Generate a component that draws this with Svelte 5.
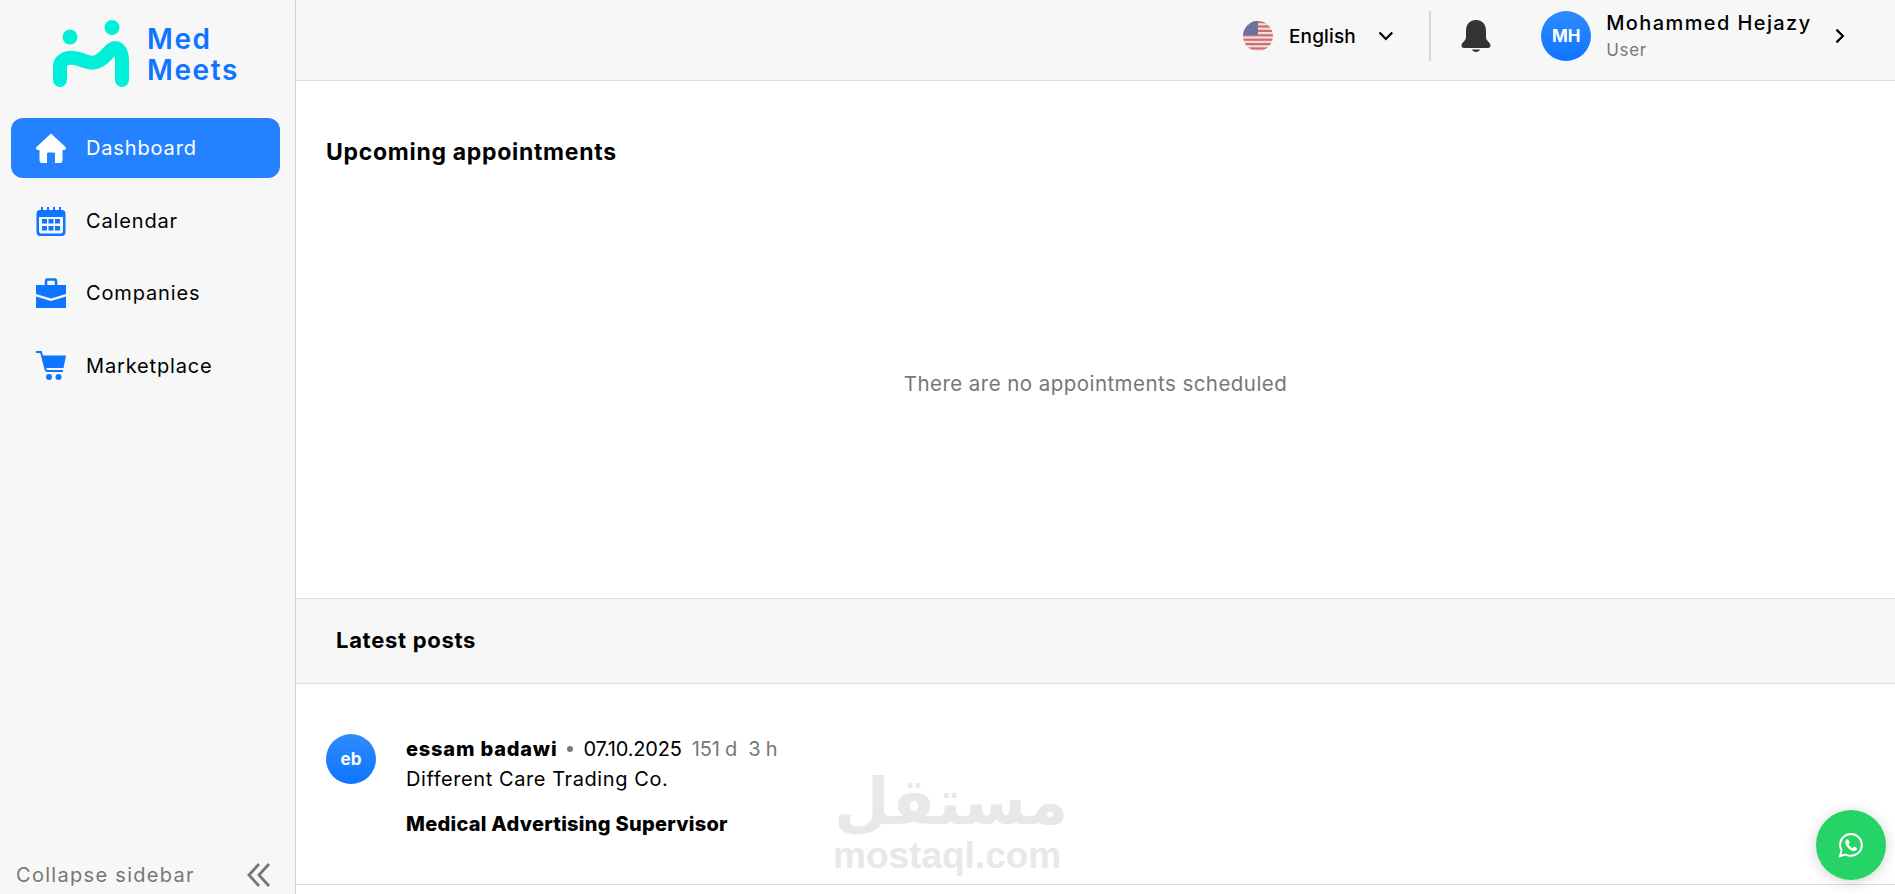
<script>
	const navItems = [
		{ label: 'Dashboard', icon: 'home', active: true },
		{ label: 'Calendar', icon: 'calendar' },
		{ label: 'Companies', icon: 'case' },
		{ label: 'Marketplace', icon: 'cart' }
	];
	const stripes = [0, 1, 2, 3, 4, 5, 6];
</script>

<div class="layout">
	<aside class="sidebar">
		<div class="brand">
			<svg class="logo" viewBox="0 0 80 72" width="80" height="72">
				<circle cx="17" cy="17" r="7.500" fill="#00efd8" />
				<circle cx="59" cy="7.500" r="7.500" fill="#00efd8" />
				<path d="M7 60 V47 C7 38 17 36 26 39 C36 43 42 45 50 38 C56 33 58 28 62 28 C66 28 69 33 69 40 V60" fill="none" stroke="#00efd8" stroke-width="14" stroke-linecap="round" />
			</svg>
			<div class="brand-name">Med<br />Meets</div>
		</div>
		<nav class="nav">
			{#each navItems as item}
				<div class="nav-item" class:active={item.active}>
					<svg class="nav-icon" viewBox="0 0 30 30" width="30" height="30">
						{#if item.icon === 'home'}
							<path d="M15 0.500 L29.500 14 C30.500 15.500 29.500 17 28 17 H26.500 V27 C26.500 29 25.500 30 24 30 H19 V21 C19 20 18.500 19.500 17.500 19.500 H12.500 C11.500 19.500 11 20 11 21 V30 H6 C4.500 30 3.500 29 3.500 27 V17 H2 C0.500 17 -0.500 15.500 0.500 14 Z" fill="#fff" />
						{:else if item.icon === 'calendar'}
							<path fill="#0d75ff" fill-rule="evenodd" d="M4 4 H5 V1 H7 V4 H11 V1 H13 V4 H17 V1 H19 V4 H23 V1 H25 V4 H26 C28.500 4 29.500 5.500 29.500 8 V26 C29.500 28.500 28 30 26 30 H4 C2 30 0.500 28.500 0.500 26 V8 C0.500 5.500 1.500 4 4 4 Z M3 11 V25 C3 26.500 4 27.500 5 27.500 H25 C26 27.500 27 26.500 27 25 V11 Z" />
							<g fill="#0d75ff">
								<rect x="6" y="13" width="5" height="4.500" />
								<rect x="12.500" y="13" width="5" height="4.500" />
								<rect x="19" y="13" width="5" height="4.500" />
								<rect x="6" y="20" width="5" height="4.500" />
								<rect x="12.500" y="20" width="5" height="4.500" />
								<rect x="19" y="20" width="5" height="4.500" />
							</g>
						{:else if item.icon === 'case'}
							<path fill="#0d75ff" d="M0 7 H30 V16 L15 20.500 L0 16 Z M0 18.500 L15 23 L30 18.500 V30 H0 Z" />
							<path fill="none" stroke="#0d75ff" stroke-width="2.500" d="M10 7 V3.500 C10 2.500 10.500 1.500 11.500 1.500 H18.500 C19.500 1.500 20 2.500 20 3.500 V7" />
						{:else}
							<path fill="#0d75ff" d="M6.500 4.500 H30 L27.500 17 H9.500 Z M10 19 H27 V21 H10 Z" />
							<path fill="none" stroke="#0d75ff" stroke-width="2" d="M0 1 H5 L10 20" />
							<circle cx="13" cy="26" r="3" fill="#0d75ff" />
							<circle cx="22.500" cy="26" r="3" fill="#0d75ff" />
						{/if}
					</svg>
					<span>{item.label}</span>
				</div>
			{/each}
		</nav>
		<div class="collapse">
			<span>Collapse sidebar</span>
			<svg viewBox="0 0 24 26" width="24" height="26">
				<path d="M12 2 L2 13 L12 24 M22 2 L12 13 L22 24" fill="none" stroke="#777" stroke-width="2.800" />
			</svg>
		</div>
	</aside>

	<main class="main">
		<header class="topbar">
			<svg class="flag" viewBox="0 0 30 30" width="30" height="30">
				<defs>
					<clipPath id="round"><circle cx="15" cy="15" r="15" /></clipPath>
				</defs>
				<g clip-path="url(#round)">
					<rect width="30" height="30" fill="#eddcd4" />
					{#each stripes as i}
						<rect y={i * 4.4} width="30" height="2.200" fill="#c9545f" />
					{/each}
					<rect width="15" height="14" fill="#4c5f8c" />
				</g>
			</svg>
			<span class="lang">English</span>
			<svg class="chev" viewBox="0 0 16 10" width="16" height="10">
				<path d="M1.500 1.500 L8 8 L14.500 1.500" fill="none" stroke="#000" stroke-width="2.200" />
			</svg>
			<div class="divider"></div>
			<svg class="bell" viewBox="0 0 30 32" width="30" height="32">
				<path fill="#333" d="M15 0 C22 0 25 5 25 11 V17 C25 21 30 23 29.500 25.500 C29.500 27 28.500 28 27 28 H3 C1.500 28 0.500 27 0.500 25.500 C0 23 5 21 5 17 V11 C5 5 8 0 15 0 Z M11 29.500 H19 C18.500 31 17 32 15 32 C13 32 11.500 31 11 29.500 Z" />
			</svg>
			<div class="avatar">MH</div>
			<div class="user">
				<div class="user-name">Mohammed Hejazy</div>
				<div class="user-role">User</div>
			</div>
			<svg class="chev-right" viewBox="0 0 10 16" width="10" height="16">
				<path d="M1.500 1.500 L8 8 L1.500 14.500" fill="none" stroke="#000" stroke-width="2.200" />
			</svg>
		</header>

		<section class="appointments">
			<h2>Upcoming appointments</h2>
			<p>There are no appointments scheduled</p>
		</section>

		<div class="band"><h3>Latest posts</h3></div>

		<article class="post">
			<div class="avatar">eb</div>
			<div class="post-body">
				<div class="post-meta">
					<b>essam badawi</b>
					<i class="dot"></i>
					<span class="date">07.10.2025</span>
					<span class="ago">151 d&nbsp; 3 h</span>
				</div>
				<div class="company">Different Care Trading Co.</div>
				<div class="role">Medical Advertising Supervisor</div>
			</div>
		</article>
	</main>

	<div class="watermark">
		<div class="wm-ar" dir="rtl">مستقل</div>
		<div class="wm-en">mostaql.com</div>
	</div>

	<div class="whatsapp">
		<svg viewBox="0 0 24 24" width="26" height="26">
			<path fill="none" stroke="#fff" stroke-width="1.800" d="M1.800 22.200 L3.300 16.800 C2.400 15.300 1.900 13.600 1.900 11.900 C1.900 6.400 6.400 1.900 11.900 1.900 C17.500 1.900 22 6.400 22 11.900 C22 17.500 17.500 22 11.900 22 C10.200 22 8.600 21.600 7.100 20.800 Z" />
			<path fill="#fff" d="M8.700 6.800 C8.300 6.800 7.900 7 7.600 7.300 C7.100 7.900 6.700 8.600 6.700 9.700 C6.700 11.300 7.900 12.900 8.200 13.300 C9.700 15.400 11.900 17 14.400 17.500 C15.800 17.700 17.200 17 17.500 15.800 C17.600 15.200 17.600 14.800 17.500 14.700 L15.300 13.500 C15 13.400 14.800 13.500 14.600 13.700 L13.900 14.600 C13.700 14.800 13.500 14.800 13.200 14.700 C11.800 14.100 10.700 13.100 9.900 11.800 C9.800 11.500 9.800 11.400 10 11.200 L10.600 10.400 C10.700 10.200 10.700 10 10.700 9.800 L9.700 7.400 C9.500 6.900 9.200 6.800 8.700 6.800 Z" />
		</svg>
	</div>
</div>

<style>
	:global(body) {
		margin: 0;
		background: #fff;
		font-family: Inter, 'Liberation Sans', sans-serif;
		color: #000;
	}
	.layout {
		display: flex;
		height: 894px;
		overflow: hidden;
		position: relative;
	}
	.sidebar {
		width: 295px;
		flex: none;
		background: #f7f7f7;
		border-right: 1px solid #d5d5d5;
		display: flex;
		flex-direction: column;
	}
	.brand {
		display: flex;
		gap: 14px;
		padding: 20px 0 0 53px;
		height: 99px;
		box-sizing: border-box;
	}
	.logo {
		flex: none;
	}
	.brand-name {
		color: #0d75ff;
		font-size: 28px;
		line-height: 31px;
		font-weight: 600;
		letter-spacing: 1.600px;
		padding-top: 4px;
	}
	.nav {
		display: flex;
		flex-direction: column;
		gap: 12.500px;
		padding: 19px 15px 0 11px;
	}
	.nav-item {
		height: 60px;
		display: flex;
		align-items: center;
		gap: 20px;
		padding-left: 25px;
		border-radius: 12px;
		font-size: 20px;
		letter-spacing: 0.850px;
	}
	.nav-item.active {
		background: #2481ff;
		color: #fff;
	}
	.nav-icon {
		flex: none;
	}
	.collapse {
		margin-top: auto;
		display: flex;
		align-items: center;
		justify-content: space-between;
		padding: 0 24px 0 16px;
		height: 38px;
		color: #777;
		font-size: 20px;
		letter-spacing: 1.300px;
	}
	.main {
		flex: 1;
		min-width: 0;
		display: flex;
		flex-direction: column;
	}
	.topbar {
		height: 81px;
		box-sizing: border-box;
		flex: none;
		background: #f7f7f7;
		border-bottom: 1px solid #dcdcdc;
		display: flex;
		align-items: center;
		padding: 0 50px 9px 947px;
	}
	.flag {
		opacity: 0.85;
		flex: none;
	}
	.lang {
		margin-left: 16px;
		font-size: 19px;
		font-weight: 500;
		letter-spacing: 0.150px;
		width: 91px;
		padding-top: 1px;
	}
	.divider {
		width: 2px;
		height: 50px;
		background: #d5d5d5;
		margin: 0 30px 0 35px;
	}
	.bell {
		margin-right: 50px;
		flex: none;
	}
	.avatar {
		width: 50px;
		height: 50px;
		border-radius: 50%;
		flex: none;
		background: linear-gradient(180deg, #2f8bff, #0d75ff);
		color: #fff;
		font-weight: 700;
		font-size: 17px;
		display: flex;
		align-items: center;
		justify-content: center;
	}
	.user {
		margin-left: 15px;
		width: 233px;
		padding-top: 2px;
	}
	.user-name {
		font-size: 20px;
		font-weight: 500;
		letter-spacing: 1.400px;
		line-height: 26px;
	}
	.user-role {
		font-size: 17px;
		color: #777;
		line-height: 25px;
		margin-top: 2px;
		letter-spacing: 0.700px;
	}
	.appointments {
		height: 517px;
		box-sizing: border-box;
		padding: 57px 30px 0;
		flex: none;
	}
	h2 {
		margin: 0;
		font-size: 23px;
		line-height: 28px;
		font-weight: 700;
		letter-spacing: 0.700px;
	}
	.appointments p {
		margin: 0;
		padding-top: 204px;
		text-align: center;
		font-size: 20.500px;
		line-height: 28px;
		color: #777;
		letter-spacing: 0.450px;
	}
	.band {
		flex: none;
		height: 86px;
		box-sizing: border-box;
		background: #f7f7f7;
		border-top: 1px solid #dcdcdc;
		border-bottom: 1px solid #dcdcdc;
		display: flex;
		align-items: center;
		padding: 0 0 2px 40px;
	}
	h3 {
		margin: 0;
		font-size: 22px;
		font-weight: 700;
		letter-spacing: 0.700px;
	}
	.post {
		flex: none;
		height: 201px;
		box-sizing: border-box;
		border-bottom: 1px solid #dcdcdc;
		display: flex;
		gap: 30px;
		padding: 50px 30px 0;
	}
	.post-body {
		font-size: 20px;
		line-height: 30px;
	}
	.post-meta {
		display: flex;
		align-items: center;
		gap: 10px;
	}
	.post-meta b {
		font-weight: 800;
		letter-spacing: 0.800px;
	}
	.date {
		letter-spacing: -0.200px;
	}
	.dot {
		width: 6px;
		height: 6px;
		border-radius: 50%;
		background: #777;
	}
	.ago {
		color: #777;
		letter-spacing: -0.150px;
	}
	.company {
		letter-spacing: 0.580px;
	}
	.role {
		margin-top: 15px;
		font-weight: 800;
		letter-spacing: 0.270px;
	}
	.watermark {
		position: absolute;
		left: 833px;
		top: 762px;
		width: 228px;
		text-align: center;
		color: #e8e8e8;
		font-weight: 700;
		pointer-events: none;
	}
	.wm-ar {
		font-family: 'DejaVu Sans', sans-serif;
		font-size: 64px;
		line-height: 68px;
		padding-top: 6px;
		margin-right: -8px;
	}
	.wm-en {
		font-family: 'Liberation Sans', sans-serif;
		font-size: 37px;
		line-height: 42px;
		margin-top: -1px;
	}
	.whatsapp {
		position: absolute;
		left: 1816px;
		top: 810px;
		width: 70px;
		height: 70px;
		border-radius: 50%;
		background: #25d366;
		box-shadow: 0 2px 14px rgba(0, 0, 0, 0.18);
		display: flex;
		align-items: center;
		justify-content: center;
	}
</style>
